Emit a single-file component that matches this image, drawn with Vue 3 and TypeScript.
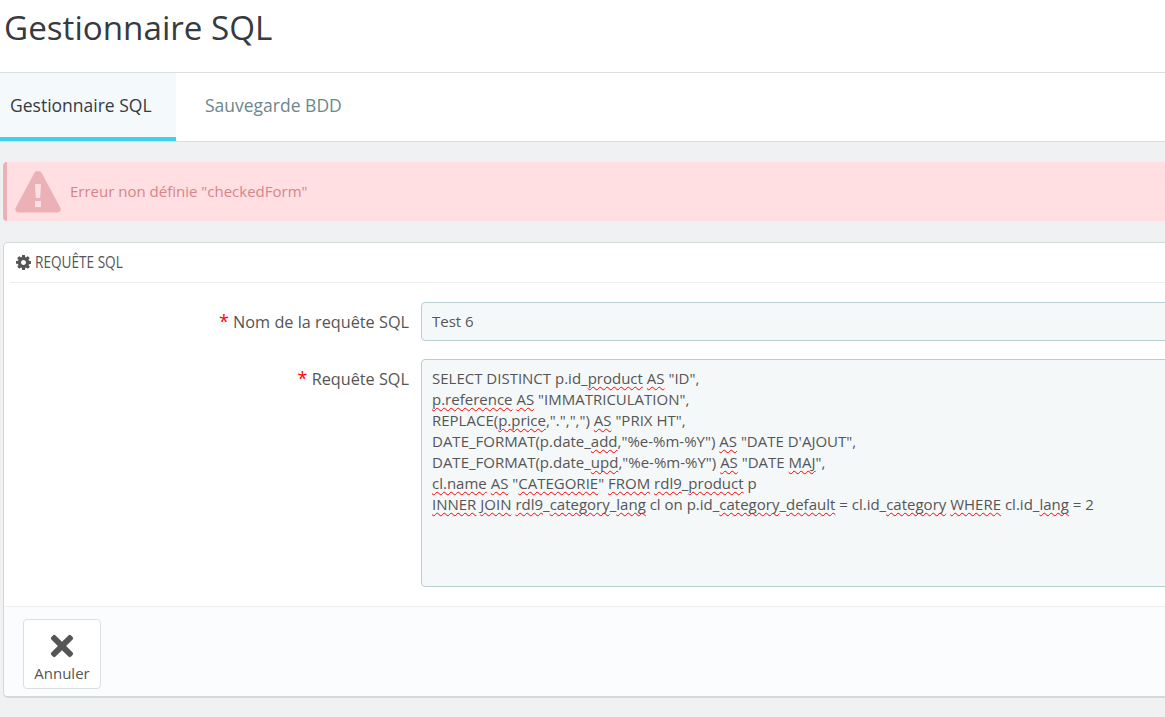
<script setup lang="ts">
interface Seg { t: string; e?: boolean }
const w = (t: string): Seg => ({ t, e: true })
const p = (t: string): Seg => ({ t })
const lines: Seg[][] = [
  [p('SELECT DISTINCT p.id_'), w('product'), p(' '), w('AS'), p(' "ID",')],
  [w('p.reference'), p(' '), w('AS'), p(' "IMMATRICULATION",')],
  [p('REPLACE('), w('p.price'), p(',".",",") '), w('AS'), p(' "PRIX HT",')],
  [p('DATE_FORMAT(p.date_'), w('add'), p(',"%e-%m-%Y") '), w('AS'), p(' "DATE D\'AJOUT",')],
  [p('DATE_FORMAT(p.date_'), w('upd'), p(',"%e-%m-%Y") '), w('AS'), p(' "DATE '), w('MAJ'), p('",')],
  [w('cl.name'), p(' '), w('AS'), p(' "'), w('CATEGORIE'), p('" '), w('FROM'), p(' '), w('rdl9'), p('_'), w('product'), p(' p')],
  [w('INNER'), p(' '), w('JOIN'), p(' '), w('rdl9'), p('_'), w('category'), p('_'), w('lang'), p(' cl on p.id_'), w('category'), p('_'), w('default'), p(' = cl.id_'), w('category'), p(' '), w('WHERE'), p(' cl.id_'), w('lang'), p(' = 2')],
]
</script>

<template>
  <div class="page">
    <header class="head"><h1>Gestionnaire SQL</h1></header>
    <nav class="tabs">
      <a class="tab active">Gestionnaire SQL</a>
      <a class="tab">Sauvegarde BDD</a>
    </nav>
    <main class="content">
      <div class="alert">
        <svg class="warn" viewBox="0 0 46 42" width="46" height="42">
          <path fill="#ebb1b6" d="M23 0c1.600 0 3 .9 3.800 2.200l18.400 34.200c.6 1.100.8 2.300.2 3.400-.6 1.100-1.600 1.700-2.900 1.700H3.500c-1.300 0-2.300-.6-2.900-1.700-.6-1.100-.4-2.300.2-3.400L19.200 2.200C20 .9 21.400 0 23 0z"/>
          <path fill="#ffdfe1" d="M20 13h6l-.8 14h-4.400zM20 30h6v6h-6z"/>
        </svg>
        <span class="alert-text">Erreur non définie "checkedForm"</span>
      </div>
      <section class="panel">
        <div class="panel-head">
          <svg class="gear" viewBox="0 0 1536 1536" width="15" height="15">
            <path fill="#555" d="M1024 768q0-106-75-181t-181-75-181 75-75 181 75 181 181 75 181-75 75-181zm512-109v222q0 12-8 23t-20 13l-185 28q-19 54-39 91 35 50 107 138 10 12 10 25t-9 23q-27 37-99 108t-94 71q-12 0-26-9l-138-108q-44 23-91 38-16 136-29 186-7 28-36 28H657q-14 0-24.500-8.500T621 1497l-28-184q-49-16-90-37l-141 107q-10 9-25 9-14 0-25-11-126-114-165-168-7-10-7-23 0-12 8-23 15-21 51-66.500t54-70.500q-27-50-41-99L29 905q-13-2-21-12.500T0 869V647q0-12 8-23t19-13l186-28q14-46 39-92-40-57-107-138-10-12-10-24 0-10 9-23 26-36 98.500-107.500T337 127q13 0 26 10l138 107q44-23 91-38 16-136 29-186 7-28 36-28h222q14 0 24.500 8.500T915 23l28 184q49 16 90 37l142-107q9-9 24-9 13 0 25 10 129 119 165 170 7 8 7 22 0 12-8 23-15 21-51 66.500t-54 70.500q26 50 41 98l183 28q13 2 21 12.500t8 23.500z"/>
          </svg>
          <span class="panel-title">REQUÊTE SQL</span>
        </div>
        <div class="form">
          <div class="row">
            <label class="lab"><span class="req">*</span> Nom de la requête SQL</label>
            <div class="field input">Test 6</div>
          </div>
          <div class="row">
            <label class="lab"><span class="req">*</span> Requête SQL</label>
            <div class="field area">
              <div v-for="(l, i) in lines" :key="i" class="ln"><template v-for="(s, j) in l" :key="j"><span v-if="s.e" class="sp">{{ s.t }}</span><template v-else>{{ s.t }}</template></template></div>
            </div>
          </div>
        </div>
        <footer class="foot">
          <button class="btn" type="button">
            <svg class="x" viewBox="0 0 26 26" width="24" height="24">
              <path fill="#555" d="M6 1.500 13 8.500 20 1.500a2 2 0 0 1 2.800 0l1.700 1.700a2 2 0 0 1 0 2.800L17.500 13l7 7a2 2 0 0 1 0 2.800l-1.700 1.700a2 2 0 0 1-2.800 0L13 17.500l-7 7a2 2 0 0 1-2.800 0l-1.700-1.700a2 2 0 0 1 0-2.800l7-7-7-7a2 2 0 0 1 0-2.800l1.700-1.700a2 2 0 0 1 2.800 0z"/>
            </svg>
            <span>Annuler</span>
          </button>
        </footer>
      </section>
    </main>
  </div>
</template>

<style>
html, body { margin: 0; overflow: hidden; background: #eff1f2; }
</style>

<style scoped>
.page { width: 1165px; height: 717px; overflow: hidden; background: #eff1f2; font-family: "Open Sans", sans-serif; color: #555; }
.head { height: 72px; background: #fff; border-bottom: 1px solid #dcdfe0; }
h1 { margin: 0; padding: 7px 0 0 4px; font-size: 33.200px; line-height: 41px; font-weight: 400; color: #363a41; }
.tabs { display: flex; height: 68px; background: #fff; border-bottom: 1px solid #dcdfe0; }
.tab { box-sizing: border-box; height: 68px; padding: 21px 25px 0 29px; font-size: 17.500px; line-height: 22px; color: #6c868e; }
.tab.active { width: 176px; padding: 21px 0 0 10px; color: #363a41; background: #f4f9fb; border-bottom: 4px solid #3ed2f0; white-space: nowrap; }
.content { padding: 20px 0 0 3px; }
.alert { display: flex; align-items: center; box-sizing: border-box; width: 1200px; height: 59px; background: #ffdfe1; border-left: 4px solid #ebb1b6; border-radius: 4px 0 0 4px; color: #d8848b; font-size: 15px; }
.alert-text { padding-bottom: 2px; }
.warn { margin: 0 9px 0 8px; flex: none; }
.panel { box-sizing: border-box; width: 1200px; height: 456px; margin-top: 21px; background: #fff; border: 1px solid #d3d8db; border-bottom-width: 2px; border-radius: 5px; display: flex; flex-direction: column; }
.panel-head { display: flex; align-items: center; height: 39px; margin-left: 6px; padding-left: 6px; border-bottom: 1px solid #eee; }
.gear { margin-right: 4px; flex: none; }
.panel-title { display: inline-block; font-size: 16.500px; line-height: 20px; padding-bottom: 2px; transform: scaleX(.825); transform-origin: left center; color: #555; white-space: nowrap; }
.form { flex: 1; display: flex; flex-direction: column; gap: 18px; padding-top: 19px; }
.row { display: flex; }
.lab { box-sizing: border-box; width: 405px; padding-top: 10px; text-align: right; font-size: 16.250px; line-height: 21px; color: #555; flex: none; }
.req { color: #f00; font-size: 18px; line-height: 18px; }
.field { box-sizing: border-box; width: 780px; margin-left: 12px; background: #f5f8f9; border: 1px solid #bbcdd2; border-radius: 4px; font-size: 15px; color: #555; }
.input { height: 39px; padding: 0 10px; line-height: 37px; }
.area { height: 228px; padding: 8px 10px; line-height: 21px; white-space: pre; }
.ln { height: 21px; }
.sp { text-decoration: underline wavy #f00 1px; text-underline-offset: 2px; text-decoration-skip-ink: none; }
.foot { box-sizing: border-box; flex: none; height: 90px; padding: 12px 19px; background: #fbfcfe; border-top: 1px solid #eee; border-radius: 0 0 5px 5px; }
.btn { display: flex; flex-direction: column; align-items: center; box-sizing: border-box; width: 78px; height: 70px; padding: 14px 0 0; background: #fff; border: 1px solid #dcdfe0; border-radius: 4px; font-family: "Open Sans", sans-serif; font-size: 15px; color: #555; line-height: 19px; }
.x { margin-bottom: 6px; flex: none; }
</style>
